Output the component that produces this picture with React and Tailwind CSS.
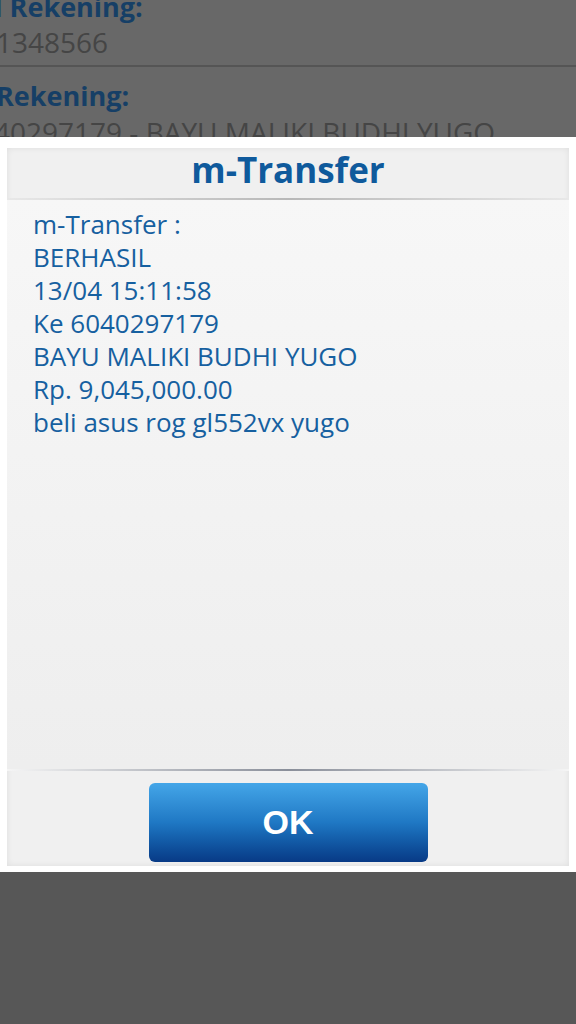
import React from 'react';

const lines = [
  'm-Transfer :',
  'BERHASIL',
  '13/04 15:11:58',
  'Ke 6040297179',
  'BAYU MALIKI BUDHI YUGO',
  'Rp. 9,045,000.00',
  'beli asus rog gl552vx yugo',
];

/* ─── Background screen (dimmed) ───────────────────────────── */
const BehindScreen = () => (
  <div className="h-[137px] overflow-hidden bg-[#686868] font-['Open_Sans',sans-serif]">
    <p className="ml-[-54px] mt-[-11px] text-[27px] font-bold leading-[36px] text-[#163f66] whitespace-nowrap">Asal Rekening:</p>
    <p className="ml-[-4px] mt-[1px] text-[28px] leading-[32px] text-[#454545]">1348566</p>
    <div className="mt-[7px] h-[2px] bg-[#555555]" />
    <p className="ml-[-4px] mt-[13px] text-[27px] font-bold leading-[32px] text-[#163f66]">Rekening:</p>
    <p className="ml-[-38px] mt-[4px] text-[28px] leading-[32px] text-[#454545] whitespace-nowrap">6040297179 - BAYU MALIKI BUDHI YUGO</p>
  </div>
);

/* ─── Dialog ───────────────────────────────────────────────── */
const Dialog = () => (
  <div className="h-[735px] bg-white px-[7px] pt-[11px] pb-[6px]">
    <div className="flex h-full flex-col bg-[#f0f0f0] shadow-[inset_0_0_6px_rgba(0,0,0,0.08)] font-['Open_Sans',sans-serif]">
      <div className="flex h-[50px] items-start justify-center pt-[2px]">
        <h1 className="text-[35px] font-bold leading-[40px] text-[#0f5a9c]">m-Transfer</h1>
      </div>
      <div className="h-[2px] bg-gradient-to-r from-[#e8e8e8] via-[#b8b8b8] to-[#e8e8e8]" />
      <div className="flex-1 bg-gradient-to-b from-[#f7f7f7] to-[#eeeeee] px-[26px] pt-[8px]">
        {lines.map((l) => (
          <p key={l} className="text-[26px] leading-[33px] text-[#1660a0]">{l}</p>
        ))}
      </div>
      <div className="h-[2px] bg-gradient-to-r from-[#f5f5f5] via-[#8a8f9a] to-[#f5f5f5]" />
      <div className="flex h-[95px] justify-center pt-[12px]">
        <button className="h-[79px] w-[279px] rounded-[6px] bg-gradient-to-b from-[#44a6e8] via-[#1f78c4] to-[#083a86] font-['Liberation_Sans',sans-serif] text-[34px] font-bold text-white">
          OK
        </button>
      </div>
    </div>
  </div>
);

export default function App() {
  return (
    <div className="flex h-[1024px] w-[576px] flex-col overflow-hidden bg-[#575757]">
      <BehindScreen />
      <Dialog />
      <div className="flex-1 bg-[#575757]" />
    </div>
  );
}
